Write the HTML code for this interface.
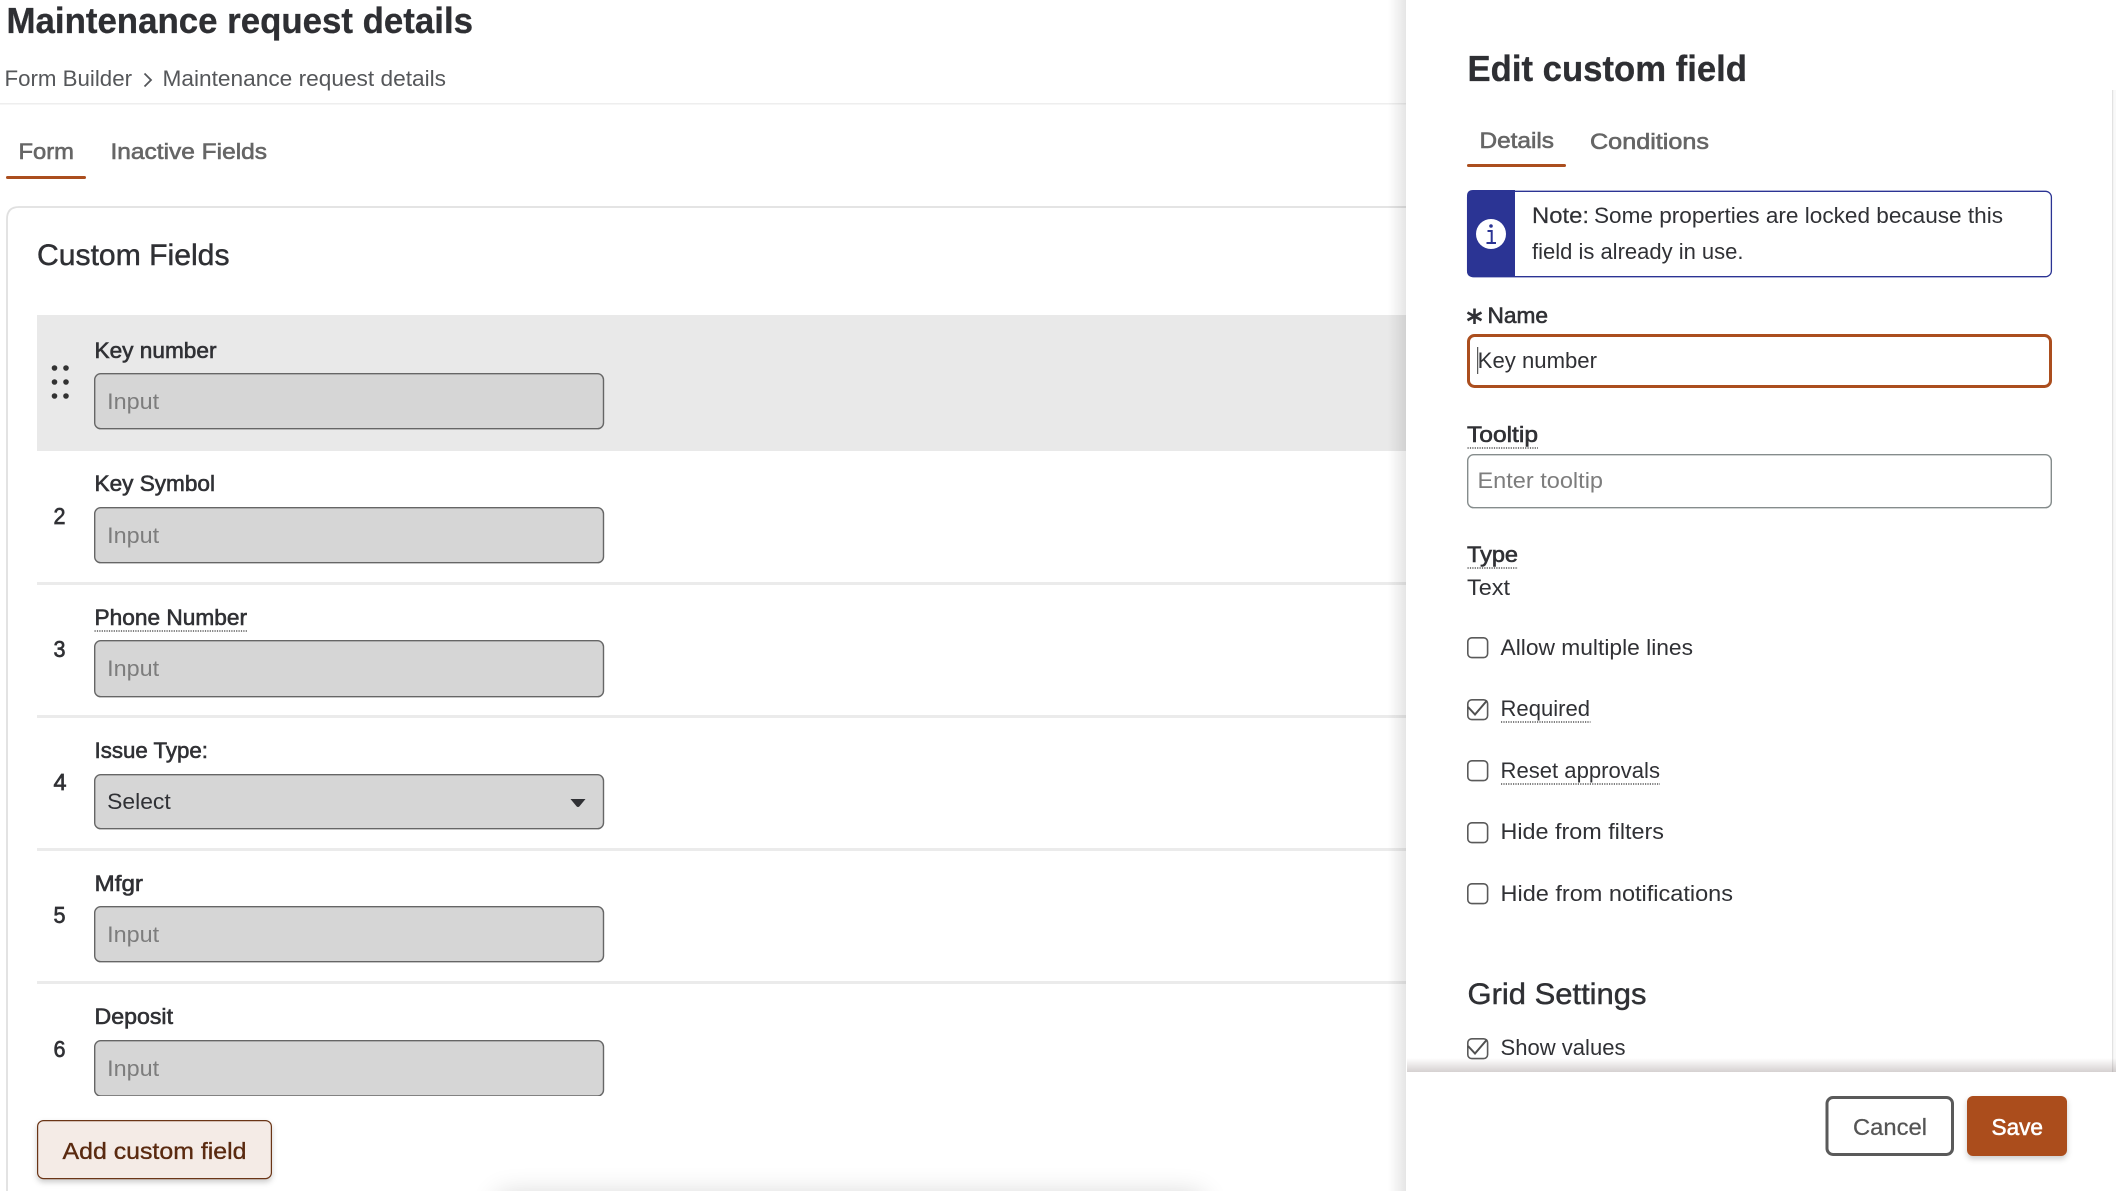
<!DOCTYPE html>
<html><head><meta charset="utf-8"><title>Maintenance request details</title>
<style>
html,body{margin:0;padding:0;width:2116px;height:1191px;overflow:hidden;background:#fff}
svg{display:block;position:absolute;left:0;top:0}
text{font-family:"Liberation Sans",Arial,sans-serif;font-size:22px;fill:#303135;white-space:pre}
.m{stroke:#303135;stroke-width:.6px}
.h{font-size:36px;font-weight:700;fill:#2e2f33;stroke:#2e2f33;stroke-width:.3px}
.h2{font-size:30px;fill:#2f3034;stroke:#2f3034;stroke-width:.45px}
.g{fill:#55575a}
.tab{fill:#666;stroke:#666;stroke-width:.6px}
.ph{fill:#7d7d7d}
.num{font-size:23px;stroke:#303135;stroke-width:.7px}
.dot{stroke:#333;stroke-width:1.2;stroke-dasharray:1.2 1.2;fill:none}
.inp{fill:#d6d6d6;stroke:#666;stroke-width:1.4}
.cb{fill:#fff;stroke:#5a5a5a;stroke-width:1.6}
</style></head>
<body>
<svg width="2116" height="1191" viewBox="0 0 2116 1191" xmlns="http://www.w3.org/2000/svg">
<defs>
<linearGradient id="ls" x1="0" x2="1" y1="0" y2="0"><stop offset="0" stop-color="#000" stop-opacity="0"/><stop offset="1" stop-color="#000" stop-opacity=".1"/></linearGradient>
<linearGradient id="fs" x1="0" x2="0" y1="0" y2="1"><stop offset="0" stop-color="#6b5a5a" stop-opacity="0"/><stop offset="1" stop-color="#6b5a5a" stop-opacity=".28"/></linearGradient>
<filter id="bl" x="-20%" y="-200%" width="140%" height="500%"><feGaussianBlur stdDeviation="14"/></filter>
<filter id="ds" x="-10%" y="-20%" width="120%" height="150%"><feDropShadow dx="0" dy="3" stdDeviation="3" flood-color="#000" flood-opacity=".2"/></filter>
<clipPath id="c6"><rect x="90" y="1036" width="520" height="60"/></clipPath>
</defs>

<!-- left side -->
<rect x="498" y="1195" width="704" height="40" fill="#000" opacity=".18" filter="url(#bl)"/>
<text class="h" x="6.500" y="33" textLength="466.500" lengthAdjust="spacingAndGlyphs">Maintenance request details</text>
<text class="g" x="4.500" y="86" textLength="127.500" lengthAdjust="spacingAndGlyphs">Form Builder</text>
<path d="M144.500 73.500 L151 80 L144.500 86.500" fill="none" stroke="#55575a" stroke-width="1.800"/>
<text class="g" x="162.500" y="86" textLength="283.500" lengthAdjust="spacingAndGlyphs">Maintenance request details</text>
<rect x="0" y="103" width="1406" height="1.500" fill="#eeeeee"/>

<text class="tab" x="18.500" y="159" textLength="55.500" lengthAdjust="spacingAndGlyphs">Form</text>
<text class="tab" x="110.500" y="159" textLength="156.500" lengthAdjust="spacingAndGlyphs">Inactive Fields</text>
<rect x="6" y="176" width="80" height="3" rx="1.500" fill="#ab4e1e"/>

<path d="M7 1191 V219 Q7 207 19 207 H1406" fill="none" stroke="#e0e0e0" stroke-width="1.800"/>
<text class="h2" x="37" y="265" textLength="192.500" lengthAdjust="spacingAndGlyphs">Custom Fields</text>

<rect x="37" y="315" width="1369" height="136" fill="#e9e9e9"/>
<g fill="#333"><circle cx="54.500" cy="368" r="2.800"/><circle cx="66" cy="368" r="2.800"/><circle cx="54.500" cy="382" r="2.800"/><circle cx="66" cy="382" r="2.800"/><circle cx="54.500" cy="396" r="2.800"/><circle cx="66" cy="396" r="2.800"/></g>
<text class="m" x="94.500" y="358" textLength="122" lengthAdjust="spacingAndGlyphs">Key number</text>
<rect class="inp" x="94.700" y="373.700" width="508.800" height="55" rx="6"/>
<text class="ph" x="107.200" y="409" textLength="52" lengthAdjust="spacingAndGlyphs">Input</text>

<text class="m" x="94.500" y="491" textLength="120.500" lengthAdjust="spacingAndGlyphs">Key Symbol</text>
<text class="num" x="53.500" y="524" textLength="12" lengthAdjust="spacingAndGlyphs">2</text>
<rect class="inp" x="94.700" y="507.700" width="508.800" height="55" rx="6"/>
<text class="ph" x="107.200" y="543" textLength="52" lengthAdjust="spacingAndGlyphs">Input</text>
<rect x="37" y="582" width="1369" height="3" fill="#ebebeb"/>

<text class="m" x="94.500" y="625" textLength="152.500" lengthAdjust="spacingAndGlyphs">Phone Number</text>
<line class="dot" x1="94.500" y1="631" x2="247" y2="631"/>
<text class="num" x="53.500" y="657" textLength="12" lengthAdjust="spacingAndGlyphs">3</text>
<rect class="inp" x="94.700" y="640.700" width="508.800" height="56" rx="6"/>
<text class="ph" x="107.200" y="676" textLength="52" lengthAdjust="spacingAndGlyphs">Input</text>
<rect x="37" y="715" width="1369" height="3" fill="#ebebeb"/>

<text class="m" x="94.500" y="758" textLength="113.500" lengthAdjust="spacingAndGlyphs">Issue Type:</text>
<text class="num" x="53.500" y="790" textLength="13" lengthAdjust="spacingAndGlyphs">4</text>
<rect class="inp" x="94.700" y="774.700" width="508.800" height="54" rx="6"/>
<text x="107.200" y="809" textLength="63.500" lengthAdjust="spacingAndGlyphs" fill="#3c3d40">Select</text>
<path d="M570.500 799 H585.500 L579.500 806.300 Q578 807.800 576.500 806.300 Z" fill="#303135"/>
<rect x="37" y="848" width="1369" height="3" fill="#ebebeb"/>

<text class="m" x="94.500" y="891" textLength="48.500" lengthAdjust="spacingAndGlyphs">Mfgr</text>
<text class="num" x="53.500" y="923" textLength="12" lengthAdjust="spacingAndGlyphs">5</text>
<rect class="inp" x="94.700" y="906.700" width="508.800" height="55" rx="6"/>
<text class="ph" x="107.200" y="942" textLength="52" lengthAdjust="spacingAndGlyphs">Input</text>
<rect x="37" y="981" width="1369" height="3" fill="#ebebeb"/>

<text class="m" x="94.500" y="1024" textLength="78.500" lengthAdjust="spacingAndGlyphs">Deposit</text>
<text class="num" x="53.500" y="1057" textLength="12" lengthAdjust="spacingAndGlyphs">6</text>
<g clip-path="url(#c6)"><rect class="inp" x="94.700" y="1040.700" width="508.800" height="55.300" rx="6"/></g>
<text class="ph" x="107.200" y="1076" textLength="52" lengthAdjust="spacingAndGlyphs">Input</text>

<rect x="37.600" y="1120.600" width="233.800" height="58" rx="6" fill="#f4ebe6" stroke="#6a3417" stroke-width="1.200" filter="url(#ds)"/>
<text x="62.500" y="1159" textLength="184" lengthAdjust="spacingAndGlyphs" style="font-size:23px;fill:#5a2a10;stroke:#5a2a10;stroke-width:.35px">Add custom field</text>

<!-- panel -->
<rect x="1388" y="0" width="18" height="1191" fill="url(#ls)"/>
<rect x="1406" y="0" width="710" height="1191" fill="#fff"/>
<rect x="2112" y="90" width="4" height="982" fill="#f9f9f9"/>
<rect x="2112" y="90" width="1.200" height="982" fill="#e2e2e2"/>

<text class="h" x="1467.500" y="81" textLength="279.500" lengthAdjust="spacingAndGlyphs">Edit custom field</text>
<text class="tab" x="1479.500" y="148" textLength="74.500" lengthAdjust="spacingAndGlyphs">Details</text>
<text class="tab" x="1590" y="149" textLength="119" lengthAdjust="spacingAndGlyphs">Conditions</text>
<rect x="1467" y="164" width="99" height="3" rx="1.500" fill="#ab4e1e"/>

<rect x="1467.600" y="191.300" width="583.800" height="85.400" rx="6" fill="#fff" stroke="#2b3494" stroke-width="1.300"/>
<path d="M1515 190 H1473 Q1467 190 1467 196 V271 Q1467 277 1473 277 H1515 Z" fill="#2b3494"/>
<circle cx="1491" cy="234" r="15" fill="#fff"/>
<circle cx="1491" cy="226" r="1.800" fill="#2b3494"/>
<path d="M1487.500 231 H1491.700 V242.500 M1486.500 243 H1496" fill="none" stroke="#2b3494" stroke-width="2"/>
<text x="1532" y="223" textLength="57" lengthAdjust="spacingAndGlyphs" style="stroke:#303135;stroke-width:.2px">Note:</text>
<text x="1594" y="223" textLength="409" lengthAdjust="spacingAndGlyphs">Some properties are locked because this</text>
<text x="1532" y="259" textLength="211.500" lengthAdjust="spacingAndGlyphs">field is already in use.</text>

<path d="M1474.500 308.500 V324 M1467.500 312.500 L1481.500 320.200 M1481.500 312.500 L1467.500 320.200" stroke="#303135" stroke-width="2.600" fill="none"/>
<text class="m" x="1487.500" y="323" textLength="60.500" lengthAdjust="spacingAndGlyphs">Name</text>
<rect x="1468.500" y="335.500" width="582" height="51" rx="6" fill="#fff" stroke="#ab4e1e" stroke-width="3"/>
<rect x="1477.200" y="347" width="1" height="27" fill="#333"/>
<text x="1477.700" y="368" textLength="119.300" lengthAdjust="spacingAndGlyphs" fill="#3c3d40">Key number</text>

<text class="m" x="1467" y="442" textLength="71" lengthAdjust="spacingAndGlyphs">Tooltip</text>
<line class="dot" x1="1467.500" y1="448" x2="1538" y2="448"/>
<rect x="1467.700" y="454.700" width="583.600" height="53" rx="6" fill="#fff" stroke="#858c8c" stroke-width="1.400"/>
<text class="ph" x="1477.500" y="488" textLength="125.500" lengthAdjust="spacingAndGlyphs">Enter tooltip</text>

<text class="m" x="1467" y="562" textLength="51" lengthAdjust="spacingAndGlyphs">Type</text>
<line class="dot" x1="1467.500" y1="568" x2="1518" y2="568"/>
<text x="1467" y="595" textLength="43" lengthAdjust="spacingAndGlyphs">Text</text>

<rect class="cb" x="1467.800" y="637.800" width="19.800" height="19.800" rx="4"/>
<text x="1500.500" y="655" textLength="192.500" lengthAdjust="spacingAndGlyphs">Allow multiple lines</text>

<rect class="cb" x="1467.800" y="699.800" width="19.800" height="19.800" rx="4"/>
<path d="M1468 707 L1475 714.500 L1487 700.500" fill="none" stroke="#505050" stroke-width="2"/>
<text x="1500.500" y="716" textLength="89.500" lengthAdjust="spacingAndGlyphs">Required</text>
<line class="dot" x1="1501" y1="722" x2="1590.500" y2="722"/>

<rect class="cb" x="1467.800" y="760.800" width="19.800" height="19.800" rx="4"/>
<text x="1500.500" y="778" textLength="159.500" lengthAdjust="spacingAndGlyphs">Reset approvals</text>
<line class="dot" x1="1501" y1="784" x2="1660" y2="784"/>

<rect class="cb" x="1467.800" y="822.800" width="19.800" height="19.800" rx="4"/>
<text x="1500.500" y="839" textLength="163.500" lengthAdjust="spacingAndGlyphs">Hide from filters</text>

<rect class="cb" x="1467.800" y="883.800" width="19.800" height="19.800" rx="4"/>
<text x="1500.500" y="901" textLength="232.500" lengthAdjust="spacingAndGlyphs">Hide from notifications</text>

<text class="h2" x="1467.500" y="1004" textLength="179" lengthAdjust="spacingAndGlyphs">Grid Settings</text>

<rect class="cb" x="1467.800" y="1038.800" width="19.800" height="19.800" rx="4"/>
<path d="M1468 1046 L1475 1053.500 L1487 1039.500" fill="none" stroke="#505050" stroke-width="2"/>
<text x="1500.500" y="1055" textLength="125" lengthAdjust="spacingAndGlyphs">Show values</text>

<!-- footer -->
<rect x="1407" y="1058" width="709" height="14" fill="url(#fs)"/>
<rect x="1407" y="1072" width="709" height="119" fill="#fff"/>
<rect x="1827" y="1097.500" width="125.500" height="57" rx="6" fill="#fff" stroke="#5a5a5a" stroke-width="3"/>
<text x="1853" y="1135" textLength="74" lengthAdjust="spacingAndGlyphs" style="font-size:23px;fill:#555;stroke:#555;stroke-width:.25px">Cancel</text>
<rect x="1967" y="1096" width="100" height="60" rx="6" fill="#ab4e1e" filter="url(#ds)"/>
<text x="1991.500" y="1135" textLength="51.500" lengthAdjust="spacingAndGlyphs" style="font-size:23px;fill:#fff;stroke:#fff;stroke-width:.55px">Save</text>
</svg>
</body></html>
